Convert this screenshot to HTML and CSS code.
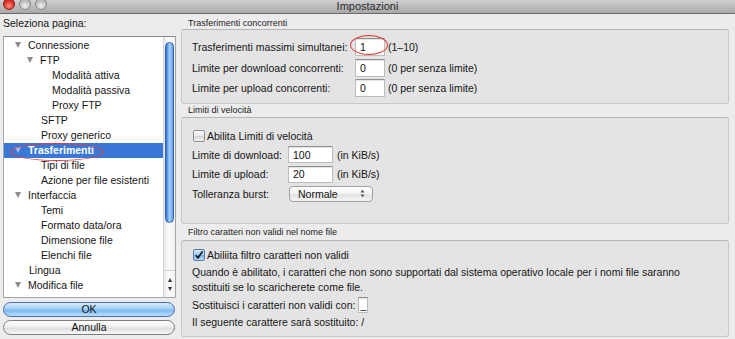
FILE: index.html
```html
<!DOCTYPE html>
<html lang="it">
<head>
    <meta charset="UTF-8">
    <title>Impostazioni</title>
    <link rel="stylesheet" href="styles.css">
</head>
<body>
    <div class="titlebar">
        <div class="lights">
            <span class="light red"></span>
            <span class="light"></span>
            <span class="light"></span>
        </div>
        <div class="title">Impostazioni</div>
        <div class="lights-spacer"></div>
    </div>

    <div class="main">
        <div class="sidebar">
            <div class="side-label">Seleziona pagina:</div>
            <div class="tree-box">
                <ul class="tree">
                    <li class="l1 open">Connessione</li>
                    <li class="l2 open">FTP</li>
                    <li class="l3">Modalità attiva</li>
                    <li class="l3">Modalità passiva</li>
                    <li class="l3">Proxy FTP</li>
                    <li class="l2">SFTP</li>
                    <li class="l2">Proxy generico</li>
                    <li class="l1 open selected">Trasferimenti<span class="mark mark-tree"></span></li>
                    <li class="l2">Tipi di file</li>
                    <li class="l2">Azione per file esistenti</li>
                    <li class="l1 open">Interfaccia</li>
                    <li class="l2">Temi</li>
                    <li class="l2">Formato data/ora</li>
                    <li class="l2">Dimensione file</li>
                    <li class="l2">Elenchi file</li>
                    <li class="l1">Lingua</li>
                    <li class="l1 open">Modifica file</li>
                </ul>
                <div class="scrollbar">
                    <div class="thumb"></div>
                    <div class="track"></div>
                    <div class="arrows">
                        <span class="arr up"></span>
                        <span class="arr down"></span>
                    </div>
                </div>
            </div>
            <button class="btn btn-ok">OK</button>
            <button class="btn">Annulla</button>
        </div>

        <div class="content">
            <div class="group-label first">Trasferimenti concorrenti</div>
            <div class="group group-1">
                <div class="form-grid grid-1">
                    <span>Trasferimenti massimi simultanei:</span>
                    <span class="cell"><input class="field" type="text" value="1" readonly><span class="mark mark-input"></span></span>
                    <span class="unit">(1–10)</span>

                    <span>Limite per download concorrenti:</span>
                    <input class="field" type="text" value="0" readonly>
                    <span class="unit">(0 per senza limite)</span>

                    <span>Limite per upload concorrenti:</span>
                    <input class="field" type="text" value="0" readonly>
                    <span class="unit">(0 per senza limite)</span>
                </div>
            </div>

            <div class="group-label">Limiti di velocità</div>
            <div class="group group-2">
                <div class="check-row">
                    <span class="check"></span>Abilita Limiti di velocità
                </div>
                <div class="form-grid grid-2">
                    <span>Limite di download:</span>
                    <input class="field" type="text" value="100" readonly>
                    <span class="unit">(in KiB/s)</span>

                    <span>Limite di upload:</span>
                    <input class="field" type="text" value="20" readonly>
                    <span class="unit">(in KiB/s)</span>

                    <span>Tolleranza burst:</span>
                    <span class="popup">
                        Normale
                        <svg class="updown" width="5" height="9" viewBox="0 0 5 9">
                            <path d="M0.5 3.5 L2.5 0.8 L4.5 3.5 Z M0.5 5.5 L2.5 8.2 L4.5 5.5 Z" fill="#555"/>
                        </svg>
                    </span>
                </div>
            </div>

            <div class="group-label">Filtro caratteri non validi nel nome file</div>
            <div class="group group-3">
                <div class="check-row">
                    <span class="check checked">
                        <svg width="10" height="10" viewBox="0 0 10 10">
                            <path d="M1.8 5.2 L4 7.8 L8.6 1.2" fill="none" stroke="#1b1b1b" stroke-width="1.7"/>
                        </svg>
                    </span>Abiliita filtro caratteri non validi
                </div>
                <p class="note">Quando è abilitato, i caratteri che non sono supportati dal sistema operativo locale per i nomi file saranno<br>sostituiti se lo scaricherete come file.</p>
                <div class="inline-row">
                    Sostituisci i caratteri non validi con:
                    <input class="field tiny" type="text" value="_" readonly>
                </div>
                <div class="plain-row">Il seguente carattere sarà sostituito: /</div>
            </div>
        </div>
    </div>
</body>
</html>
```

FILE: styles.css
```css
* {
    box-sizing: border-box;
}

body {
    margin: 0;
    width: 735px;
    height: 339px;
    overflow: hidden;
    background-color: #ececec;
    font-family: "Liberation Sans", Arial, sans-serif;
    font-size: 10.5px;
    color: #151515;
}

/* barra del titolo */
.titlebar {
    height: 14px;
    display: flex;
    background: linear-gradient(#d0d0d0, #a9a9a9);
    border-bottom: 1px solid #6a6a6a;
}

.lights {
    width: 60px;
    display: flex;
    gap: 4px;
    padding-left: 3px;
    margin-top: -2px;
}

.lights-spacer {
    width: 60px;
}

.light {
    width: 12px;
    height: 12px;
    border-radius: 50%;
    background: radial-gradient(circle at 50% 70%, #f0f0f0, #b8b8b8 70%, #9a9a9a);
    border: 1px solid #8c8c8c;
}

.light.red {
    background: radial-gradient(circle at 50% 70%, #ff8a7a, #d8322a 60%, #9e1410);
    border-color: #8e1d18;
}

.title {
    flex: 1;
    text-align: center;
    font-size: 11px;
    line-height: 13px;
    color: #2a2a2a;
}

.main {
    display: flex;
    height: 325px;
}

/* colonna sinistra */
.sidebar {
    width: 173px;
    margin-left: 3px;
    display: flex;
    flex-direction: column;
}

.side-label {
    padding-top: 2px;
    line-height: 15px;
    margin-bottom: 5px;
}

.tree-box {
    height: 262px;
    display: flex;
    background-color: #fff;
    border: 1px solid #a5a5a5;
    border-top-color: #8a8a8a;
    overflow: hidden;
}

.tree {
    flex: 1;
    list-style: none;
    margin: 0;
    padding: 1px 0 0;
}

.tree li {
    position: relative;
    height: 15px;
    line-height: 15px;
    white-space: nowrap;
}

.tree .l1 { padding-left: 25px; }
.tree .l2 { padding-left: 37px; }
.tree .l3 { padding-left: 48px; }

.tree .open::before {
    content: "";
    display: inline-block;
    width: 0;
    height: 0;
    margin-left: -14px;
    margin-right: 7px;
    border-left: 3.5px solid transparent;
    border-right: 3.5px solid transparent;
    border-top: 6px solid #8d8d8d;
    vertical-align: 1px;
}

.tree .selected {
    background-color: #3a78d8;
    color: #fff;
    font-weight: bold;
}

.tree .selected::before {
    border-top-color: #a9bedf;
}

.scrollbar {
    width: 12px;
    display: flex;
    flex-direction: column;
    padding-top: 5px;
    background: linear-gradient(to right, #e6e6e6, #fcfcfc 40%, #f2f2f2);
    border-left: 1px solid #d6d6d6;
}

.thumb {
    height: 181px;
    margin: 0 1px;
    border-radius: 5px;
    border: 1px solid #2d63b8;
    background: linear-gradient(to right, #2f6fd0, #7fb6f0 35%, #a9d2fa 55%, #5b98e4);
}

.track {
    flex: 1;
}

.arrows {
    height: 27px;
    display: flex;
    flex-direction: column;
    align-items: center;
    justify-content: center;
    gap: 5px;
    border-top: 1px solid #cfcfcf;
}

.arr {
    width: 0;
    height: 0;
    border-left: 2.5px solid transparent;
    border-right: 2.5px solid transparent;
}

.arr.up { border-bottom: 4px solid #333; }
.arr.down { border-top: 4px solid #333; }

.btn {
    width: 172px;
    height: 15px;
    padding: 0;
    font-family: inherit;
    font-size: 10.5px;
    line-height: 13px;
    color: #111;
    border: 1px solid #7d7d7d;
    border-radius: 8px;
    background: linear-gradient(#ffffff, #f0f0f0 45%, #dedede 55%, #f8f8f8);
    margin-top: 3px;
}

.btn-ok {
    margin-top: 4px;
    border-color: #4a6fa8;
    background: linear-gradient(#d6ebfd, #a5cff5 45%, #7db8ee 55%, #b9e0fd);
}

/* pannello destro */
.content {
    flex: 1;
    margin-left: 5px;
    margin-right: 6px;
}

.group-label {
    height: 13px;
    line-height: 13px;
    padding-left: 7px;
    font-size: 9px;
    color: #222;
}

.group-label.first {
    height: 15px;
    padding-top: 3px;
    line-height: 12px;
}

.group-label:nth-of-type(5) {
    height: 16px;
    padding-top: 2px;
}

.group {
    background-color: #e4e4e4;
    border: 1px solid #c8c8c8;
    border-top-color: #b6b6b6;
    border-radius: 3px;
    padding-left: 10px;
}

.group-1 {
    height: 75px;
    padding-top: 8px;
}

.group-2 {
    height: 107px;
    padding-top: 10px;
}

.group-3 {
    height: 97px;
    padding-top: 6px;
    display: flex;
    flex-direction: column;
    gap: 2px;
}

.form-grid {
    display: grid;
    align-items: center;
    row-gap: 2.5px;
}

.grid-1 {
    grid-template-columns: 163px 30px auto;
    grid-auto-rows: 18px;
}

.grid-2 {
    grid-template-columns: 96px 45px auto;
    grid-auto-rows: 17px;
    margin-top: 2px;
}

.unit {
    padding-left: 3px;
}

.grid-2 .unit {
    padding-left: 4px;
}

.cell {
    position: relative;
    height: 100%;
}

.field {
    display: block;
    width: 100%;
    height: 100%;
    margin: 0;
    padding: 0 0 0 4px;
    font-family: inherit;
    font-size: 10.5px;
    color: #111;
    background-color: #fff;
    border: 1px solid #bdbdbd;
    border-top-color: #8f8f8f;
    border-radius: 0;
    box-shadow: inset 0 1px 1px rgba(0, 0, 0, 0.12);
    outline: none;
}

.field.tiny {
    display: inline-block;
    width: 10px;
    height: 16px;
    padding: 0 0 0 1px;
    margin-left: 1px;
    vertical-align: middle;
}

.check-row {
    height: 16px;
    display: flex;
    align-items: center;
}

.check {
    width: 12px;
    height: 12px;
    margin-left: 1px;
    margin-right: 2px;
    display: flex;
    align-items: center;
    justify-content: center;
    border: 1px solid #8d8d8d;
    border-radius: 2px;
    background: linear-gradient(#ffffff, #e6e6e6 50%, #d6d6d6 55%, #f4f4f4);
}

.check.checked {
    border-color: #5a78a8;
    background: linear-gradient(#d8ecfd, #9ccaf3 50%, #7cb6ec 55%, #b8defb);
}

.popup {
    grid-column: 2 / 4;
    width: 84px;
    height: 16px;
    margin-left: 1px;
    display: flex;
    align-items: center;
    justify-content: space-between;
    padding: 0 7px 0 8px;
    border: 1px solid #a0a0a0;
    border-radius: 4px;
    background: linear-gradient(#ffffff, #f1f1f1 50%, #e2e2e2 55%, #f5f5f5);
}

.note {
    margin: 0;
    line-height: 15px;
}

.inline-row {
    height: 16px;
    display: flex;
    align-items: center;
    gap: 2px;
}

.plain-row {
    line-height: 15px;
}

/* cerchi rossi di evidenziazione */
.mark {
    position: absolute;
    border: 1.5px solid #e23b3b;
    border-radius: 50%;
    pointer-events: none;
}

.mark-tree {
    left: 6px;
    top: 0;
    width: 94px;
    height: 18px;
}

.mark-input {
    left: -5px;
    top: -3px;
    width: 38px;
    height: 20px;
}
```
